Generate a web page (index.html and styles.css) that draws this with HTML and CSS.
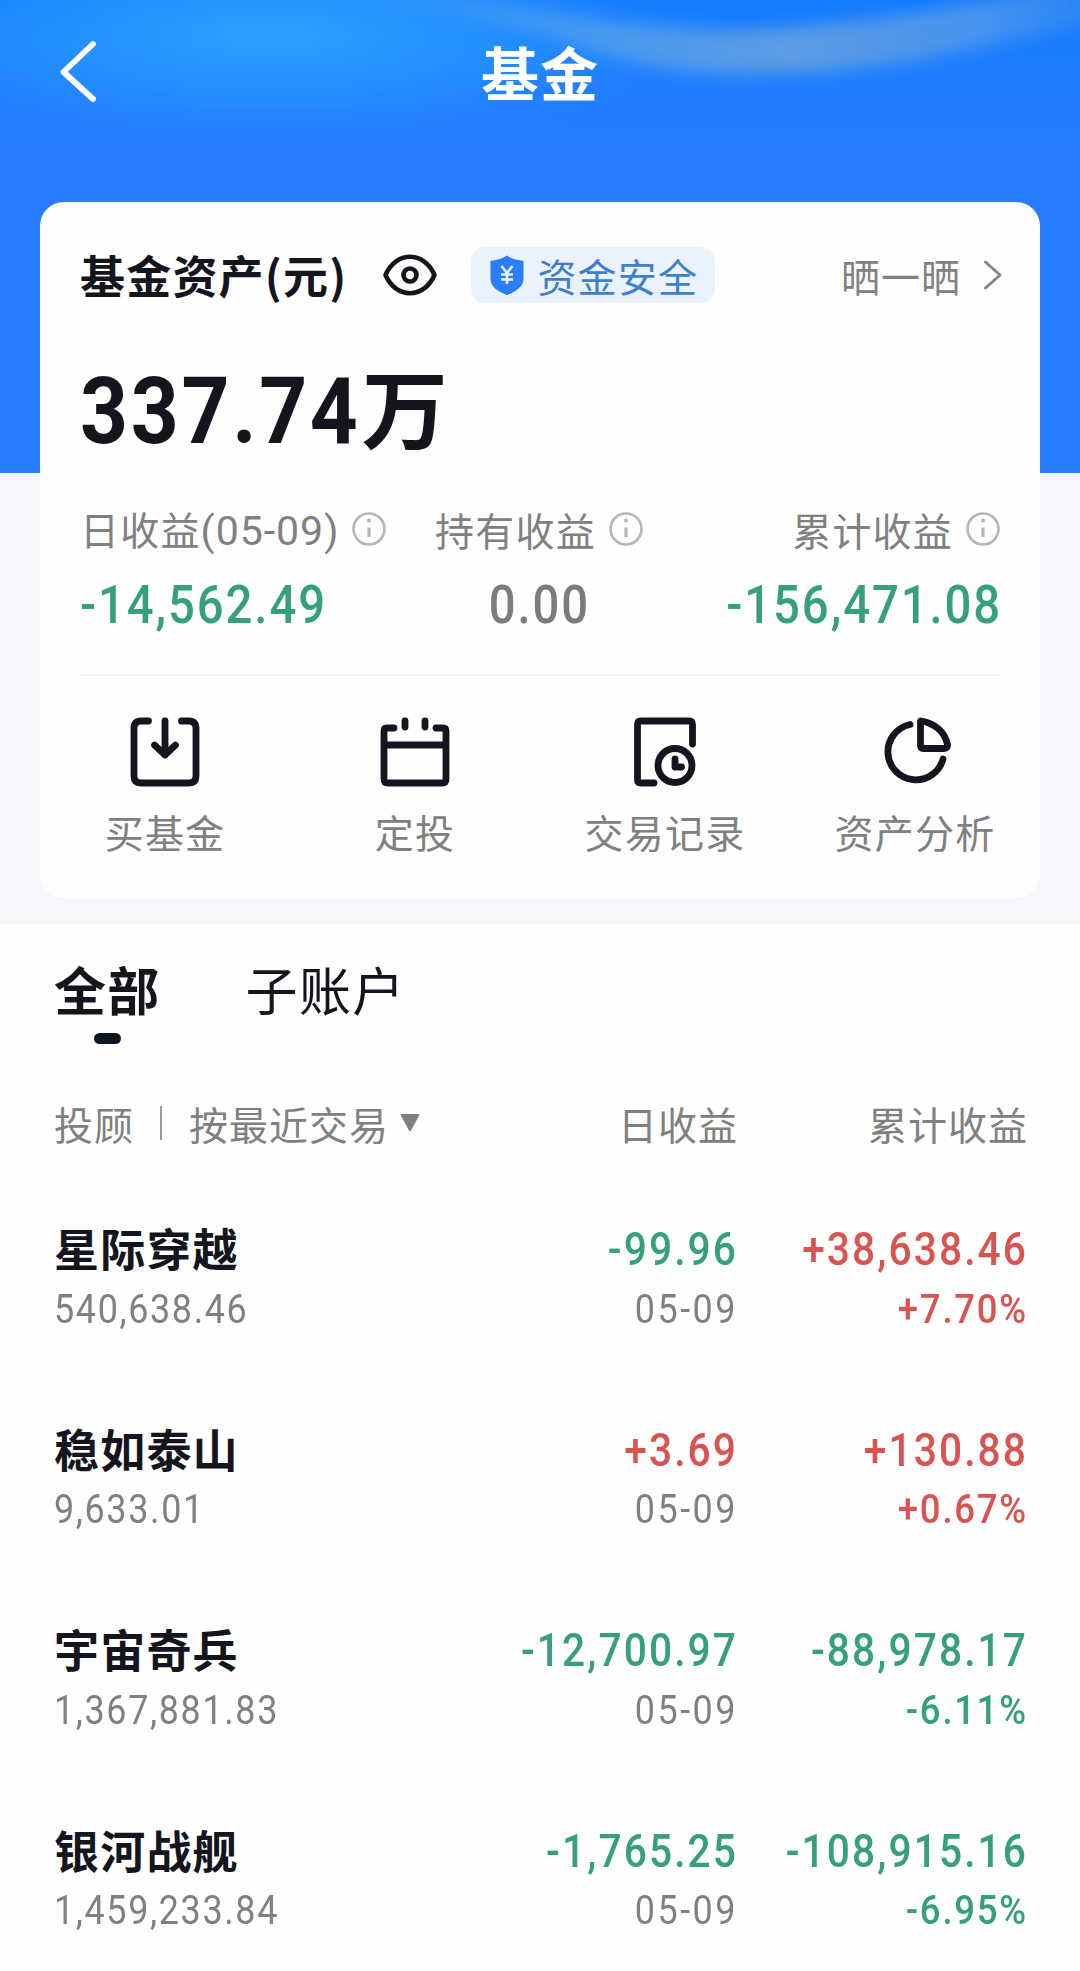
FILE: index.html
```html
<!DOCTYPE html>
<html lang="zh-CN">
<head>
<meta charset="utf-8">
<title>基金</title>
<link rel="stylesheet" href="styles.css">
</head>
<body>
<div class="page">
  <div class="hero">
    <svg class="hero-art" viewBox="0 0 1080 300" preserveAspectRatio="none" aria-hidden="true">
      <defs>
        <linearGradient id="base" x1="0" y1="0" x2="0" y2="1">
          <stop offset="0" stop-color="#127bfe"/><stop offset=".2" stop-color="#1c7eff"/><stop offset=".5" stop-color="#277cff"/><stop offset="1" stop-color="#287cff"/>
        </linearGradient>
        <radialGradient id="glow"><stop offset="0" stop-color="#2f9eff"/><stop offset=".5" stop-color="#2896ff" stop-opacity=".7"/><stop offset="1" stop-color="#2080ff" stop-opacity="0"/></radialGradient>
        <linearGradient id="ribbon" x1="0" y1="0" x2="1" y2="0"><stop offset="0" stop-color="#3c9cfa" stop-opacity=".2"/><stop offset=".35" stop-color="#4f9dec" stop-opacity=".85"/><stop offset=".6" stop-color="#5c9ce4"/><stop offset=".85" stop-color="#5298ea" stop-opacity=".8"/><stop offset="1" stop-color="#4593f0" stop-opacity=".4"/></linearGradient>
        <filter id="soft" x="-10%" y="-50%" width="120%" height="200%"><feGaussianBlur stdDeviation="8"/></filter>
      </defs>
      <rect width="1080" height="300" fill="url(#base)"/>
      <ellipse cx="270" cy="35" rx="470" ry="120" fill="url(#glow)"/>
      <path d="M330 -12 Q470 -5 600 20 Q700 32 780 28 Q920 18 1100 -24 L1100 22 Q1000 42 920 60 Q820 76 720 74 Q640 70 570 44 Q460 8 330 -5Z" fill="url(#ribbon)" filter="url(#soft)"/>
    </svg>
    <header class="nav">
      <svg class="back" viewBox="0 0 48 68"><path d="M37 6 7.500 34 37 61" fill="none" stroke="#fff" stroke-width="5.800" stroke-linecap="round" stroke-linejoin="round"/></svg>
      <h1 class="nav-title">基金</h1>
    </header>
  </div>

  <section class="card">
    <div class="card-head">
      <span class="card-title">基金资产(元)</span>
      <svg class="eye" viewBox="0 0 56 44"><path d="M3.500 22C14 -2.300 42 -2.300 52.500 22C42 46.300 14 46.300 3.500 22Z" fill="none" stroke="#15161c" stroke-width="4.600" stroke-linejoin="round"/><circle cx="28" cy="22" r="6.500" fill="none" stroke="#15161c" stroke-width="4.600"/></svg>
      <span class="safe">
        <svg class="shield" viewBox="0 0 34 40"><path d="M17 .5C22 4 28 5 33.500 6V24C33.500 32 25 37 17 40C9 37 .5 32 .5 24V6C6 5 12 4 17 .5Z" fill="#2b7dfa"/><path d="M11.500 11 17 18 22.500 11M17 18V29M11 19.500H23M11 24.500H23" fill="none" stroke="#e9f3ff" stroke-width="2.600"/></svg>
        <span>资金安全</span>
      </span>
      <span class="share"><span>晒一晒</span><svg class="chev" viewBox="0 0 20 30"><path d="M2.500 2 17 15 2.500 28" fill="none" stroke="#868686" stroke-width="3" stroke-linecap="round" stroke-linejoin="round"/></svg></span>
    </div>
    <div class="total"><span class="total-num">337.74</span><span class="unit">万</span></div>
    <div class="stats">
      <div class="stat">
        <div class="label"><span>日收益<span class="date">(05-09)</span></span><svg class="info" viewBox="0 0 36 36"><circle cx="18" cy="18" r="15.500"/><path d="M18 16.500V26"/><circle class="dot" cx="18" cy="9.500" r="2"/></svg></div>
        <div class="value down">-14,562.49</div>
      </div>
      <div class="stat stat-mid">
        <div class="label"><span>持有收益</span><svg class="info" viewBox="0 0 36 36"><circle cx="18" cy="18" r="15.500"/><path d="M18 16.500V26"/><circle class="dot" cx="18" cy="9.500" r="2"/></svg></div>
        <div class="value flat">0.00</div>
      </div>
      <div class="stat stat-end">
        <div class="label"><span>累计收益</span><svg class="info" viewBox="0 0 36 36"><circle cx="18" cy="18" r="15.500"/><path d="M18 16.500V26"/><circle class="dot" cx="18" cy="9.500" r="2"/></svg></div>
        <div class="value down">-156,471.08</div>
      </div>
    </div>
    <nav class="actions">
      <a class="action"><svg viewBox="0 0 76 76"><path d="M21.500 7H14Q7 7 7 14V62Q7 69 14 69H62Q69 69 69 62V14Q69 7 62 7H54.500M38 7V41M27.500 31 38 41 48.500 31"/></svg><span>买基金</span></a>
      <a class="action"><svg viewBox="0 0 76 76"><path d="M17 14H10Q7 14 7 17V65Q7 69 11 69H65Q69 69 69 65V17Q69 14 66 14H59M7 31H69M28 7V13M48 7V13"/></svg><span>定投</span></a>
      <a class="action"><svg viewBox="0 0 76 76"><path d="M27 69H14Q10.500 69 10.500 65.500V10.500Q10.500 7 14 7H62Q65.500 7 65.500 10.500V30"/><circle cx="48" cy="51.500" r="17"/><path d="M48 45V53H54.500"/></svg><span>交易记录</span></a>
      <a class="action"><svg viewBox="0 0 76 76"><path d="M33 10.500A28 28 0 1 0 66 45"/><path d="M44 7Q66 11 70.500 30.500Q71 34.500 67 34.500H46.500Q43.500 34.500 43.500 31.500V8.500Q43.500 7 44 7Z"/></svg><span>资产分析</span></a>
    </nav>
  </section>

  <main class="holdings">
    <div class="tabs">
      <span class="tab active">全部</span>
      <span class="tab">子账户</span>
    </div>
    <div class="list-head">
      <div class="sort"><span>投顾</span><i class="bar"></i><span>按最近交易</span><svg class="tri" viewBox="0 0 20 18"><path d="M1.500 0H18.500Q20 0 19.200 1.500L11 16.500Q10 18 9 16.500L.8 1.500Q0 0 1.500 0Z" fill="#808080"/></svg></div>
      <span class="right">日收益</span>
      <span class="right">累计收益</span>
    </div>
    <div class="row">
      <span class="name">星际穿越</span><span class="num down">-99.96</span><span class="num up">+38,638.46</span>
      <span class="sub">540,638.46</span><span class="sub day">05-09</span><span class="sub pct up">+7.70%</span>
    </div>
    <div class="row">
      <span class="name">稳如泰山</span><span class="num up">+3.69</span><span class="num up">+130.88</span>
      <span class="sub">9,633.01</span><span class="sub day">05-09</span><span class="sub pct up">+0.67%</span>
    </div>
    <div class="row">
      <span class="name">宇宙奇兵</span><span class="num down">-12,700.97</span><span class="num down">-88,978.17</span>
      <span class="sub">1,367,881.83</span><span class="sub day">05-09</span><span class="sub pct down">-6.11%</span>
    </div>
    <div class="row">
      <span class="name">银河战舰</span><span class="num down">-1,765.25</span><span class="num down">-108,915.16</span>
      <span class="sub">1,459,233.84</span><span class="sub day">05-09</span><span class="sub pct down">-6.95%</span>
    </div>
  </main>
</div>
</body>
</html>
```
FILE: styles.css
```css
* { box-sizing: border-box; }
body { margin: 0; background: #fefefe; font-family: "Noto Sans CJK SC", sans-serif; color: #14151d; }
.page { width: 1080px; height: 1971px; overflow: hidden; background: #f6f7fa; display: flex; flex-direction: column; }

.hero { position: relative; height: 473px; background: #287cff; flex: none; }
.hero-art { position: absolute; left: 0; top: 0; width: 1080px; height: 300px; }
.nav { position: relative; display: grid; grid-template-columns: 120px 1fr 120px; align-items: center; height: 144px; }
.back { width: 48px; height: 68px; margin-left: 56px; }
.nav-title { margin: 0; text-align: center; color: #fff; font-size: 58px; line-height: 80px; font-weight: 700; letter-spacing: 1px; padding-bottom: 2px; }

.card { position: relative; margin: -271px 40px 0; height: 696px; padding-top: 44px; border-radius: 24px; background: #fefefe; flex: none; }
.card-head { display: flex; align-items: center; height: 57px; padding: 0 37px 0 40px; }
.card-title { font-size: 45px; line-height: 56px; font-weight: 700; letter-spacing: 1.200px; padding-top: 1px; }
.eye { width: 56px; height: 44px; margin-left: 35px; }
.safe { display: flex; align-items: center; gap: 13px; height: 56px; margin-left: 33px; padding: 0 17px 0 19px; border-radius: 14px; background: #eaf2fd; color: #3f80cc; font-size: 39px; line-height: 50px; letter-spacing: 1.200px; }
.shield { width: 34px; height: 40px; }
.share { display: flex; align-items: center; gap: 22px; margin-left: auto; color: #808080; font-size: 39px; line-height: 50px; letter-spacing: 1px; }
.chev { width: 20px; height: 30px; }

/* figures are set condensed, with open tracking */
.total-num, .value, .num, .sub { font-family: Roboto, sans-serif; transform: scaleX(.875); transform-origin: left; }

.total { display: flex; align-items: baseline; height: 110px; margin-top: 48px; padding-left: 40px; line-height: 110px; font-weight: 700; }
.total-num { font-size: 93px; letter-spacing: 3px; transform: scaleX(.9); }
.unit { font-size: 86px; margin-left: -30px; }

.stats { display: grid; grid-template-columns: 1fr auto 1fr; height: 170px; margin: 45px 39px 0 40px; border-bottom: 2px solid #f4f5f6; }
.stat-mid { text-align: center; margin-left: -2px; }
.stat-end { text-align: right; }
.label { display: flex; align-items: center; gap: 12px; height: 46px; color: #808080; font-size: 39px; line-height: 46px; letter-spacing: 1.200px; }
.stat-end .label { justify-content: flex-end; }
.date { font-family: Roboto, sans-serif; font-size: 41px; letter-spacing: 1px; }
.info { width: 36px; height: 36px; fill: none; stroke: #b6b6b6; stroke-width: 2.600; }
.info path { stroke-width: 3.200; }
.dot { fill: #b6b6b6; stroke: none; }
.value { margin-top: 23px; height: 60px; font-size: 54px; line-height: 60px; font-weight: 500; letter-spacing: 2.200px; }
.stat-mid .value { transform-origin: center; }
.stat-end .value { transform-origin: right; margin-right: -1px; }
.flat { color: #7b7b80; }
.down { color: #35a07b; }
.up { color: #d95350; }

.actions { display: grid; grid-template-columns: repeat(4, 1fr); padding-top: 38px; }
.action { display: flex; flex-direction: column; align-items: center; color: #808080; font-size: 39px; line-height: 50px; letter-spacing: 1.200px; }
.action svg { width: 76px; height: 76px; margin-bottom: 16px; fill: none; stroke: #14161f; stroke-width: 6.800; stroke-linecap: round; stroke-linejoin: round; }

.holdings { margin-top: 26px; flex: 1; background: #fefefe; }
.tabs { display: flex; gap: 85px; height: 146px; padding: 33px 0 0 54px; border-bottom: 2px solid #fbfbfb; }
.tab { font-size: 52px; line-height: 64px; letter-spacing: 1.300px; }
.active { display: flex; flex-direction: column; align-items: center; font-weight: 700; }
.active::after { content: ""; width: 27px; height: 11px; margin-top: 12px; border-radius: 6px; background: #101522; }
.list-head, .row { display: grid; grid-template-columns: 1fr 300px 290px; padding: 0 52px 0 54px; align-items: center; }
.list-head { height: 60px; margin-top: 23px; color: #808080; font-size: 39px; line-height: 60px; letter-spacing: 1px; }
.sort { display: flex; align-items: center; white-space: nowrap; }
.bar { width: 2px; height: 34px; margin: 0 27px 0 26px; background: #999; }
.tri { width: 20px; height: 18px; margin-left: 11px; }
.right { text-align: right; }
.row { grid-template-rows: 60px 60px; height: 200.500px; align-content: start; }
.list-head + .row { margin-top: 66px; }
.name { font-size: 45px; line-height: 55px; padding-bottom: 3px; font-weight: 700; letter-spacing: 1.200px; }
.num { text-align: right; transform-origin: right; font-size: 46.500px; line-height: 60px; font-weight: 500; letter-spacing: 2.400px; }
.sub { font-size: 41px; line-height: 61px; color: #808080; font-weight: 450; letter-spacing: 1.900px; }
.day, .pct { text-align: right; transform-origin: right; }
.day { letter-spacing: 2.900px; }
.pct { letter-spacing: 2px; font-weight: 500; transform: scaleX(.89); }
.sub.up { color: #d95350; }
.sub.down { color: #35a07b; }
```
